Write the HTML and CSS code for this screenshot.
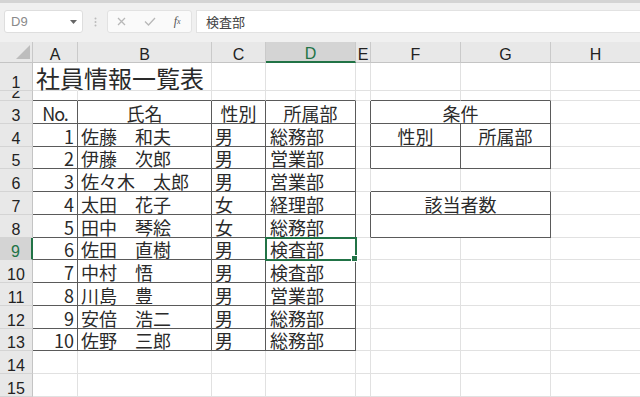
FILE: index.html
```html
<!DOCTYPE html>
<html lang="ja">
<head>
    <meta charset="UTF-8">
    <title>社員情報一覧表</title>
    <link rel="stylesheet" href="styles.css">
</head>
<body>
    <div class="toolbar">
        <div class="name-box">
            <span>D9</span>
            <svg width="7" height="4" viewBox="0 0 7 4"><polygon points="0,0 7,0 3.5,4" fill="#666"/></svg>
        </div>
        <div class="grip">
            <svg width="3" height="10" viewBox="0 0 3 10"><circle cx="1.5" cy="1.5" r="1" fill="#bbb"/><circle cx="1.5" cy="5" r="1" fill="#bbb"/><circle cx="1.5" cy="8.5" r="1" fill="#bbb"/></svg>
        </div>
        <div class="fx-box">
            <span class="tool"><svg width="9" height="9" viewBox="0 0 9 9"><path d="M1 1L8 8M8 1L1 8" stroke="#b8b8b8" stroke-width="1.3"/></svg></span>
            <span class="tool"><svg width="12" height="9" viewBox="0 0 12 9"><path d="M1 4.5L4.5 8L11 1" stroke="#b8b8b8" stroke-width="1.3" fill="none"/></svg></span>
            <span class="tool fx"><i>f</i><sub>x</sub></span>
        </div>
        <div class="formula">検査部</div>
    </div>

    <div class="sheet">
        <!-- column headers -->
        <div class="corner"><svg width="14" height="14" viewBox="0 0 14 14"><polygon points="14,0 14,14 0,14" fill="#bdbdbd"/></svg></div>
        <div class="col-head">A</div>
        <div class="col-head">B</div>
        <div class="col-head">C</div>
        <div class="col-head on">D</div>
        <div class="col-head">E</div>
        <div class="col-head">F</div>
        <div class="col-head">G</div>
        <div class="col-head">H</div>

        <!-- row 1 -->
        <div class="row-head">1</div>
        <div class="cell title">社員情報一覧表</div>
        <div class="cell"></div><div class="cell"></div><div class="cell"></div>
        <div class="cell"></div><div class="cell"></div><div class="cell"></div><div class="cell"></div>

        <!-- row 2 -->
        <div class="row-head">2</div>
        <div class="cell b"></div><div class="cell b"></div><div class="cell b"></div><div class="cell b"></div>
        <div class="cell"></div><div class="cell b"></div><div class="cell b"></div><div class="cell"></div>

        <!-- row 3 -->
        <div class="row-head">3</div>
        <div class="cell r b mid"><span class="no">No.</span></div>
        <div class="cell r b mid">氏名</div>
        <div class="cell r b mid">性別</div>
        <div class="cell r b mid">所属部</div>
        <div class="cell r"></div>
        <div class="cell r b mid span2">条件</div>
        <div class="cell"></div>

        <!-- row 4 -->
        <div class="row-head">4</div>
        <div class="cell r b num">1</div>
        <div class="cell r b">佐藤　和夫</div>
        <div class="cell r b">男</div>
        <div class="cell r b dept">総務部</div>
        <div class="cell r"></div>
        <div class="cell r b mid">性別</div>
        <div class="cell r b mid">所属部</div>
        <div class="cell"></div>

        <!-- row 5 -->
        <div class="row-head">5</div>
        <div class="cell r b num">2</div>
        <div class="cell r b">伊藤　次郎</div>
        <div class="cell r b">男</div>
        <div class="cell r b dept">営業部</div>
        <div class="cell r"></div>
        <div class="cell r b"></div>
        <div class="cell r b"></div>
        <div class="cell"></div>

        <!-- row 6 -->
        <div class="row-head">6</div>
        <div class="cell r b num">3</div>
        <div class="cell r b">佐々木　太郎</div>
        <div class="cell r b">男</div>
        <div class="cell r b dept">営業部</div>
        <div class="cell"></div>
        <div class="cell b"></div>
        <div class="cell b"></div>
        <div class="cell"></div>

        <!-- row 7 -->
        <div class="row-head">7</div>
        <div class="cell r b num">4</div>
        <div class="cell r b">太田　花子</div>
        <div class="cell r b">女</div>
        <div class="cell r b dept">経理部</div>
        <div class="cell r"></div>
        <div class="cell r b mid span2">該当者数</div>
        <div class="cell"></div>

        <!-- row 8 -->
        <div class="row-head">8</div>
        <div class="cell r b num">5</div>
        <div class="cell r b">田中　琴絵</div>
        <div class="cell r b">女</div>
        <div class="cell r b dept">総務部</div>
        <div class="cell r"></div>
        <div class="cell r b span2"></div>
        <div class="cell"></div>

        <!-- row 9 -->
        <div class="row-head on">9</div>
        <div class="cell r b num">6</div>
        <div class="cell r b">佐田　直樹</div>
        <div class="cell r b">男</div>
        <div class="cell r b dept sel">検査部</div>
        <div class="cell"></div><div class="cell"></div><div class="cell"></div><div class="cell"></div>

        <!-- row 10 -->
        <div class="row-head">10</div>
        <div class="cell r b num">7</div>
        <div class="cell r b">中村　悟</div>
        <div class="cell r b">男</div>
        <div class="cell r b dept">検査部</div>
        <div class="cell"></div><div class="cell"></div><div class="cell"></div><div class="cell"></div>

        <!-- row 11 -->
        <div class="row-head">11</div>
        <div class="cell r b num">8</div>
        <div class="cell r b">川島　豊</div>
        <div class="cell r b">男</div>
        <div class="cell r b dept">営業部</div>
        <div class="cell"></div><div class="cell"></div><div class="cell"></div><div class="cell"></div>

        <!-- row 12 -->
        <div class="row-head">12</div>
        <div class="cell r b num">9</div>
        <div class="cell r b">安倍　浩二</div>
        <div class="cell r b">男</div>
        <div class="cell r b dept">総務部</div>
        <div class="cell"></div><div class="cell"></div><div class="cell"></div><div class="cell"></div>

        <!-- row 13 -->
        <div class="row-head">13</div>
        <div class="cell r b num">10</div>
        <div class="cell r b">佐野　三郎</div>
        <div class="cell r b">男</div>
        <div class="cell r b dept">総務部</div>
        <div class="cell"></div><div class="cell"></div><div class="cell"></div><div class="cell"></div>

        <!-- row 14 -->
        <div class="row-head">14</div>
        <div class="cell"></div><div class="cell"></div><div class="cell"></div><div class="cell"></div>
        <div class="cell"></div><div class="cell"></div><div class="cell"></div><div class="cell"></div>

        <!-- row 15 -->
        <div class="row-head">15</div>
        <div class="cell"></div><div class="cell"></div><div class="cell"></div><div class="cell"></div>
        <div class="cell"></div><div class="cell"></div><div class="cell"></div><div class="cell"></div>
    </div>
</body>
</html>
```

FILE: styles.css
```css
* {
    box-sizing: border-box;
}
body {
    margin: 0;
    width: 640px;
    height: 397px;
    overflow: hidden;
    background: #fff;
    font-family: "Liberation Sans", Arial, sans-serif;
}
.toolbar {
    height: 42px;
    background: #f0f0f0;
    border-top: 3px solid #d4d4d4;
    display: flex;
    align-items: flex-start;
    padding: 7px 0 0 4px;
}
.name-box {
    width: 79px;
    height: 23px;
    background: #fff;
    border: 1px solid #dedede;
    border-radius: 3px;
    display: flex;
    align-items: center;
    justify-content: space-between;
    padding: 0 5px 0 6px;
    font-size: 13px;
    color: #8a8a8a;
}
.grip {
    width: 24px;
    display: flex;
    justify-content: center;
    padding-top: 7px;
}
.fx-box {
    width: 85px;
    height: 23px;
    background: #fafafa;
    border: 1px solid #e2e2e2;
    border-radius: 3px;
    display: flex;
    align-items: center;
}
.tool {
    width: 28px;
    display: flex;
    justify-content: center;
    align-items: center;
}
.fx {
    font-family: "Liberation Serif", serif;
    font-size: 12px;
    color: #555;
}
.fx sub {
    font-size: 8px;
    font-style: italic;
}
.formula {
    flex: 1;
    height: 23px;
    margin-left: 4px;
    background: #fff;
    border: 1px solid #e2e2e2;
    border-right: none;
    padding-left: 9px;
    display: flex;
    align-items: center;
    font-family: "Noto Sans CJK JP", sans-serif;
    font-size: 13px;
    color: #444;
}
.sheet {
    display: grid;
    grid-template-columns: 33px 45px 134px 54px 90px 15px 90px 90px 90px;
    grid-template-rows: 21px 28px 10px repeat(13, 22.75px);
}
.corner {
    background: #e8e8e8;
    border-right: 1px solid #c8c8c8;
    border-bottom: 1px solid #c4c4c4;
    display: flex;
    justify-content: flex-end;
    align-items: flex-end;
    padding: 0 2px 3px 0;
}
.col-head {
    background: #e8e8e8;
    border-right: 1px solid #cacaca;
    border-bottom: 1px solid #c4c4c4;
    display: flex;
    justify-content: center;
    align-items: flex-end;
    font-size: 16px;
    line-height: 14px;
    color: #222;
}
.col-head.on {
    background: #d4d4d4;
    color: #217346;
    border-bottom: 2px solid #217346;
}
.row-head {
    background: #e8e8e8;
    border-right: 1px solid #c4c4c4;
    border-bottom: 1px solid #d4d4d4;
    display: flex;
    justify-content: center;
    align-items: flex-end;
    overflow: hidden;
    font-size: 16px;
    line-height: 14px;
    color: #222;
}
.row-head.on {
    background: #d4d4d4;
    color: #217346;
    border-right: 2px solid #217346;
}
.cell {
    border-right: 1px solid #e1e1e1;
    border-bottom: 1px solid #e1e1e1;
    display: flex;
    align-items: flex-end;
    padding: 0 3px;
    white-space: nowrap;
    min-width: 0;
    font-family: "Noto Sans CJK JP", sans-serif;
    font-size: 18px;
    line-height: 20px;
    color: #2a2a2a;
}
.r {
    border-right-color: #5a5a5a;
}
.b {
    border-bottom-color: #5a5a5a;
}
.num {
    justify-content: flex-end;
}
.mid {
    justify-content: center;
}
.no {
    letter-spacing: -1px;
}
.dept {
    padding-left: 4px;
}
.span2 {
    grid-column: span 2;
}
.title {
    font-size: 24px;
    line-height: 24px;
    border-right-color: transparent;
}
.sel {
    position: relative;
    outline: 2px solid #217346;
    outline-offset: -1px;
}
.sel::after {
    content: "";
    position: absolute;
    right: -3px;
    bottom: -3px;
    width: 5px;
    height: 5px;
    background: #217346;
    border: 1px solid #fff;
}
```
